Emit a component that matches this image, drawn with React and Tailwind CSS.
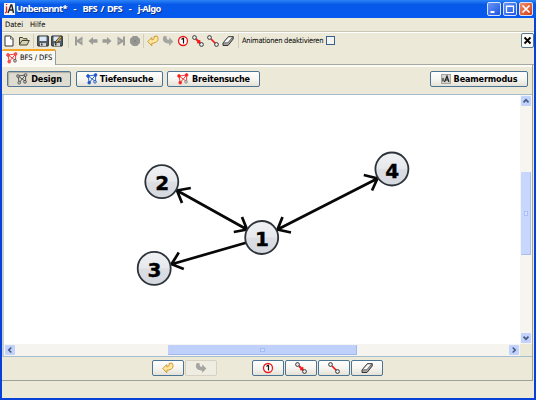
import React from "react";

const small = "font-['DejaVu_Sans_Condensed','DejaVu_Sans',sans-serif] whitespace-pre text-black leading-none";
const bold = "font-['DejaVu_Sans',sans-serif] font-bold whitespace-pre text-black leading-none";

function Icon({ w = 12, h = 12, children, className = "" }) {
  return (
    <svg width={w} height={h} viewBox={`0 0 ${w} ${h}`} className={`block shrink-0 ${className}`}>
      {children}
    </svg>
  );
}

const NewFile = () => (
  <Icon>
    <path d="M2 1h5.500l2.500 2.500V11H2z" fill="#fff" stroke="#333" />
    <path d="M7.500 1v3H10" fill="none" stroke="#555" strokeWidth=".8" />
  </Icon>
);
const OpenFile = () => (
  <Icon>
    <path d="M1.500 9.500V2.500h3l1 1.200H9V5.500M1.500 9.500L4 5.500h7.300L9 10H1.500z" fill="#d8d3b5" stroke="#45432f" strokeLinejoin="round" />
  </Icon>
);
const Save = ({ pen }) => (
  <Icon>
    <rect x=".7" y="1" width="10.600" height="10" rx=".5" fill="#56616c" stroke="#20252a" />
    <rect x="2.500" y="1.500" width="7" height="4.500" fill="#d9e9f5" />
    <rect x="3" y="8" width="6" height="3" fill="#d0d2d2" />
    <rect x="4" y="8.500" width="1.500" height="2" fill="#333" />
    {pen && <path d="M4 8.500l1-2.500 4.500-5 1.500 1.200-4.500 5z" fill="#e3ae45" stroke="#302a1c" strokeWidth=".8" />}
  </Icon>
);
const First = () => (
  <Icon>
    <path d="M2 1.500h2v3.500L9.500 1.500V10.500L4 7v3.500H2z" fill="#9c9c98" />
    <path d="M8.500 4.800l-2 1.200 2 1.200z" fill="#c4c2b8" />
  </Icon>
);
const Flip = ({ children }) => <div className="-scale-x-100">{children}</div>;
const Left = () => (
  <Icon>
    <path d="M1.500 6L6 2v2.300h4.500v3.400H6V10z" fill="#9c9c98" />
  </Icon>
);
const Stop = () => (
  <Icon>
    <path d="M4 1h4l3 3v4l-3 3H4L1 8V4z" fill="#969694" />
    <path d="M4.500 4.500l3 3m0-3l-3 3" stroke="#85857f" strokeWidth=".8" />
  </Icon>
);
const Undo = () => (
  <Icon>
    <path d="M.8 6.500L4.800 2.500v2.300c2 .2 2.700-1.300 2.200-3.300L10 1c2.500 3.500.5 7-5.200 7.300V10.800z" fill="#ffe79c" stroke="#c99029" strokeLinejoin="round" strokeWidth=".9" />
  </Icon>
);
const Redo = () => (
  <Icon>
    <path d="M11.300 6.500L7.200 2.300v2.400C5.200 4.900 4.300 3.500 4.800 1.300L1.800 1C-.5 4.700 1.500 8.200 7.200 8.500V11z" fill="#a5a5a1" />
  </Icon>
);
const NodeOne = () => (
  <Icon>
    <circle cx="6" cy="6" r="4.500" fill="#fff" stroke="#ee171b" strokeWidth="1.300" />
    <path d="M4.500 4.400L6 3.300h.5v5.300" fill="none" stroke="#111" strokeWidth="1.200" />
  </Icon>
);
const Edge = ({ wide }) => (
  <Icon>
    <path d="M4 4l4.500 4.500" stroke="#f51616" strokeWidth={wide ? 2 : 1.700} />
    {wide && <path d="M8 5v3H5z" fill="#f51616" stroke="#f51616" strokeWidth=".6" />}
    <circle cx="2.500" cy="2.500" r="1.900" fill="#eee" stroke="#383838" />
    <circle cx="9.500" cy="9.500" r="1.900" fill="#eee" stroke="#383838" />
  </Icon>
);
const Eraser = () => (
  <Icon>
    <path d="M1 8L6.500 1.500h4.700V4L6 10.500H1z" fill="#a5a5a5" stroke="#333" strokeLinejoin="round" />
    <path d="M1.300 7.800L6.500 1.800h4.400L5.800 7.800z" fill="#f5f5f5" stroke="#444" strokeWidth=".7" />
  </Icon>
);

function Graph({ line, a, b }) {
  return (
    <Icon>
      <path d="M2 3L9.600 2 3.200 9.700zM9.600 2v6.500L2 3" fill="none" stroke={line} strokeWidth=".9" />
      <circle cx="9" cy="8.800" r="1.400" fill="#c5c5c0" stroke={b} strokeWidth=".8" />
      <circle cx="2" cy="3" r="1.400" fill={a} stroke={line} strokeWidth=".7" />
      <circle cx="9.600" cy="2" r="1.400" fill={a} stroke={line} strokeWidth=".7" />
      <circle cx="3.200" cy="9.700" r="1.400" fill={a} stroke={line} strokeWidth=".7" />
    </Icon>
  );
}

const Logo = () => (
  <Icon w={12} h={12}>
    <rect width="11" height="12" fill="#f7f4f1" />
    <path d="M2.500 1v1M2.500 3.500V9L1 10" stroke="#e51d1d" strokeWidth="1.300" fill="none" />
    <path d="M4 10L7 2h.8L9.500 10M5 7h4" stroke="#222" strokeWidth="1.400" fill="none" />
  </Icon>
);
const Beamer = () => (
  <Icon w={10} h={10}>
    <rect x=".5" y=".5" width="9" height="9" fill="#d5d5d2" stroke="#a5a59f" />
    <path d="M2 7.500V4M3.500 8L6 2.200 8 8M4.500 6h3" stroke="#222" strokeWidth="1.200" fill="none" />
  </Icon>
);

const Sep = ({ className }) => <div className={`h-[14px] w-px bg-[#d2ceba] ${className}`} />;

function Button({ className, children, on, off }) {
  const look = on
    ? "border-[#527796] bg-[#dedbd0] shadow-[inset_1px_1px_1px_#b0ada2]"
    : off
      ? "border-[#d5d2c3] bg-[#efede2]"
      : "border-[#4c7595] bg-linear-to-b from-white via-[#f7f6f2] to-[#e4e1d7]";
  return (
    <div className={`flex shrink-0 items-center justify-center rounded-[2px] border ${look} ${className}`}>{children}</div>
  );
}

function WinButton({ close, children }) {
  return (
    <div
      className={`h-[14px] w-[14px] rounded-[2px] border border-[#d5e2fa] bg-linear-to-br ${close ? "from-[#f08b68] to-[#d13a13]" : "from-[#6995f5] to-[#1f53df]"}`}
    >
      <Icon>{children}</Icon>
    </div>
  );
}

function ScrollButton({ turn, className = "" }) {
  return (
    <div className={`flex h-[10px] w-[10px] shrink-0 items-center justify-center rounded-[1px] bg-[#c1d2fc] ${className}`}>
      <Icon w={8} h={8} className={turn}>
        <path d="M5.300 1.500L2.800 4l2.500 2.500" fill="none" stroke="#465c87" strokeWidth="1.700" />
      </Icon>
    </div>
  );
}

const nodes = [
  [261.700, 237.500, "1"],
  [161.800, 181.700, "2"],
  [154.200, 268.400, "3"],
  [391.900, 169, "4"],
];

function Canvas() {
  return (
    <svg width="516" height="249" viewBox="4 95 516 249" className="block bg-white">
      <defs>
        <linearGradient id="ball" x2="0" y2="1">
          <stop offset="0" stopColor="#f1f2f4" />
          <stop offset=".48" stopColor="#e6e8ec" />
          <stop offset=".52" stopColor="#dcdee3" />
          <stop offset="1" stopColor="#d5d8df" />
        </linearGradient>
      </defs>
      <g fill="none" stroke="#080808" strokeWidth="2.700">
        <path d="M177 190.500L247 229.500M190.800 188L177 190.500L182 203M242 217L247 229.500L233.800 232" />
        <path d="M246 242.800L171.500 264.200M178.800 252.500L171.500 264.200L183.800 269" />
        <path d="M277.500 229.500L377.500 178.500M282.500 217L277.500 229.500L291 232.500M363.800 175L377.500 178.500L372 190.500" />
      </g>
      {nodes.map(([x, y, n]) => (
        <g key={n}>
          <circle cx={x} cy={y} r="16.500" fill="url(#ball)" stroke="#2c333a" strokeWidth="1.800" />
          <text x={x + 0.3} y={y + 8.600} textAnchor="middle" fontSize="20" fontWeight="700" stroke="#000" strokeWidth=".4" fontFamily="DejaVu Sans, sans-serif">
            {n}
          </text>
        </g>
      ))}
    </svg>
  );
}

export default function App() {
  return (
    <div className="flex h-[400px] w-[536px] flex-col overflow-hidden bg-[#0841d8]">
      <header className="flex h-[18px] shrink-0 items-center bg-linear-to-b from-[#2c83f7] via-[#0759e8] via-25% to-[#0458ef] pl-[4px] pr-[3px]">
        <Logo />
        <span className="w-[150px] whitespace-pre font-['Noto_Sans',sans-serif] text-[9.3px] font-bold leading-none tracking-[-0.65px] [word-spacing:1.6px] text-white [text-shadow:1px_1px_0_#0a318b]">
          Unbenannt*  -  BFS / DFS  -  j-Algo
        </span>
        <div className="ml-auto flex gap-[2px]">
          <WinButton><path d="M2.500 9h4" stroke="#fff" strokeWidth="2" /></WinButton>
          <WinButton><path d="M2.500 3h7v6.500h-7zM2.500 3.500h7" fill="none" stroke="#fff" strokeWidth="1.200" /></WinButton>
          <WinButton close><path d="M2.500 2.500l7 7m0-7l-7 7" stroke="#fff" strokeWidth="1.700" /></WinButton>
        </div>
      </header>

      <div className="mx-[2px] flex h-[380px] flex-col bg-[#ece9d8]">
        <nav className={`flex h-[14px] shrink-0 items-center gap-[7px] border-b border-[#c9c6b7] pl-[3px] text-[7.5px] ${small}`}>
          <span className="w-[18px]">Datei</span>
          <span>Hilfe</span>
        </nav>

        <div className="flex h-[17px] shrink-0 items-center border-t border-white pb-px pl-[1px]">
          <NewFile />
          <div className="ml-[3px]"><OpenFile /></div>
          <Sep className="ml-[3px] mr-[3px]" />
          <Save />
          <div className="ml-[2px]"><Save pen /></div>
          <Sep className="ml-[5px] mr-[4px]" />
          <div className="flex gap-[2px]">
            <First />
            <Left />
            <Flip><Left /></Flip>
            <Flip><First /></Flip>
            <Stop />
          </div>
          <Sep className="ml-[2px] mr-[3px]" />
          <div className="flex gap-[3px]">
            <Undo />
            <Redo />
            <NodeOne />
            <Edge wide />
            <Edge />
            <Eraser />
          </div>
          <Sep className="ml-[4px] mr-[3px]" />
          <span className={`w-[84px] text-[7.5px] tracking-[-0.24px] ${small}`}>Animationen deaktivieren</span>
          <div className="h-[9px] w-[9px] border border-[#36628d] bg-[#f2f2ef]" />
          <div className="ml-auto flex h-[15px] w-[13px] items-center justify-center rounded-[2px] border border-[#55788f] bg-[#fbfaf5]">
            <Icon w={9} h={9}><path d="M1.500 1.500l6 6m0-6l-6 6" stroke="#000" strokeWidth="1.800" /></Icon>
          </div>
        </div>

        <div className="flex h-[16px] shrink-0">
          <div className="flex h-full w-[54px] items-center gap-[2px] rounded-t-[2px] border-r border-t-2 border-r-[#919b9c] border-t-[#f5a623] bg-[#f9f8f3] pb-px pl-[4px]">
            <Graph line="#ea3030" a="#ff5a5a" b="#555" />
            <span className={`text-[7.5px] tracking-[-0.03px] ${small}`}>BFS / DFS</span>
          </div>
          <div className="flex-1 border-b border-[#a5a99f]" />
        </div>

        <main className="mr-px flex h-[316px] shrink-0 flex-col border-b border-r border-[#9da298]">
          <div className="flex h-[30px] shrink-0 items-start border-b border-t-2 border-b-[#a6bdd0] border-t-[#fcfbf6] pl-[5px] pr-[4px] pt-[4px]">
            <Button on className="h-[16px] w-[64px] gap-[3px]">
              <Graph line="#444" a="#bbb" b="#444" />
              <span className={`text-[8.1px] tracking-[-0.14px] ${bold}`}>Design</span>
            </Button>
            <Button className="ml-[5px] h-[16px] w-[87px] gap-[2px]">
              <Graph line="#1e58c5" a="#1759d6" b="#1759d6" />
              <span className={`text-[8.1px] tracking-[-0.14px] ${bold}`}>Tiefensuche</span>
            </Button>
            <Button className="ml-[4px] h-[16px] w-[93px] gap-[3px]">
              <Graph line="#ef3030" a="#ff1616" b="#8b8b85" />
              <span className={`text-[8.1px] tracking-[-0.2px] ${bold}`}>Breitensuche</span>
            </Button>
            <Button className="ml-auto h-[16px] w-[98px] gap-[3px]">
              <Beamer />
              <span className={`text-[8.1px] tracking-[-0.15px] ${bold}`}>Beamermodus</span>
            </Button>
          </div>

          <div className="flex h-[262px] shrink-0 flex-col border-b border-l-2 border-b-[#a6bdd0] border-l-[#c5cfd5]">
            <div className="flex h-[249px] shrink-0">
              <Canvas />
              <div className="flex w-[12px] flex-col items-center bg-[#f6f5ef] py-px">
                <ScrollButton turn="rotate-90" />
                <div className="mt-[66px] flex h-[83px] w-[10px] items-center justify-center rounded-[1px] border-b border-r border-[#a6bdf0] bg-[#c7d7ff]">
                  <div className="h-[5px] w-[4px] border border-[#a9c1f8] bg-[#d8e4ff]" />
                </div>
                <ScrollButton turn="-rotate-90" className="mt-auto" />
              </div>
            </div>
            <div className="flex h-[12px] items-center bg-[#f5f4ee]">
              <ScrollButton turn="" className="ml-px" />
              <div className="ml-[153px] flex h-[10px] w-[189px] items-center justify-center rounded-[1px] border-b border-r border-[#9fb8ed] bg-[#bfd0fb]">
                <div className="h-[4px] w-[5px] border border-[#a3bcf5] bg-[#cddcff]" />
              </div>
              <ScrollButton turn="rotate-180" className="ml-auto mr-px" />
              <div className="h-[12px] w-[12px] bg-[#ece9d8]" />
            </div>
          </div>

          <div className="flex items-start pl-[150px] pt-[3px]">
            <Button className="h-[16px] w-[32px]"><Undo /></Button>
            <Button off className="ml-px h-[16px] w-[32px]"><Redo /></Button>
            <div className="ml-[35px] flex gap-px">
              <Button className="h-[16px] w-[32px]"><NodeOne /></Button>
              <Button className="h-[16px] w-[32px]"><Edge wide /></Button>
              <Button className="h-[16px] w-[32px]"><Edge /></Button>
              <Button className="h-[16px] w-[32px]"><Eraser /></Button>
            </div>
          </div>
        </main>
      </div>
    </div>
  );
}
